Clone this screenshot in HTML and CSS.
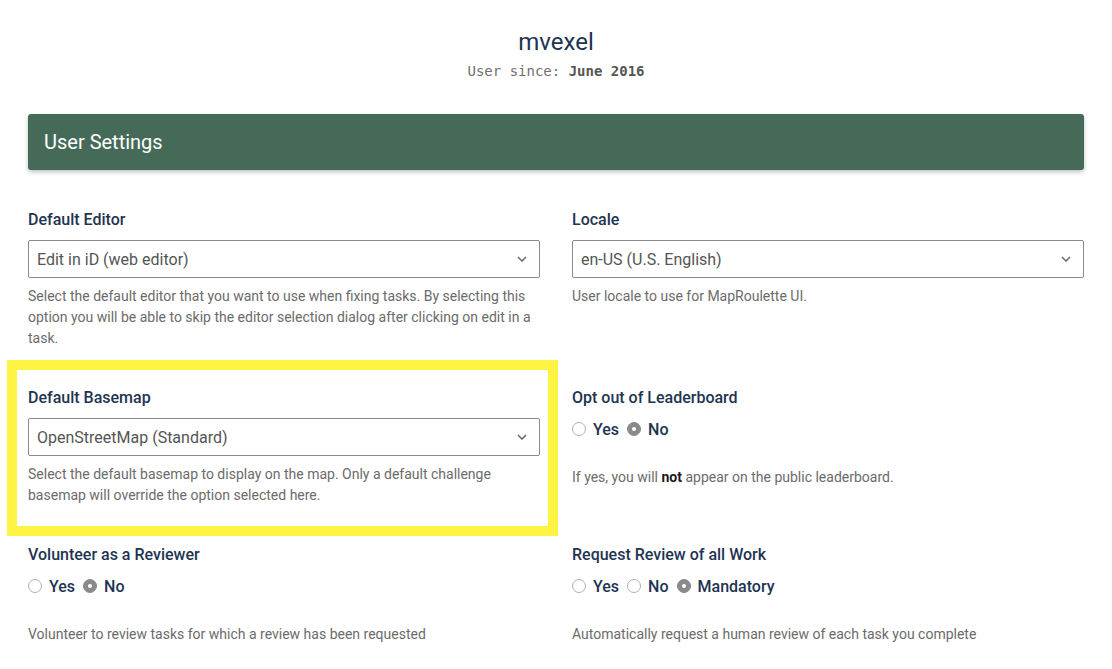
FILE: index.html
```html
<!DOCTYPE html>
<html>
<head>
<meta charset="utf-8">
<link rel="stylesheet" href="styles.css">
</head>
<body>
<div class="page">
  <div class="profile">
    <h1 class="username">mvexel</h1>
    <div class="since">User since: <strong>June 2016</strong></div>
  </div>
  <div class="settings-bar">User Settings</div>
  <div class="settings-grid">
    <div class="field">
      <div class="label">Default Editor</div>
      <div class="select"><span>Edit in iD (web editor)</span><svg class="chev" width="10" height="6" viewBox="0 0 10 6"><path d="M1 1l4 4 4-4" fill="none" stroke="#666" stroke-width="1.5"/></svg></div>
      <div class="help">Select the default editor that you want to use when fixing tasks. By selecting this option you will be able to skip the editor selection dialog after clicking on edit in a task.</div>
    </div>
    <div class="field">
      <div class="label">Locale</div>
      <div class="select"><span>en-US (U.S. English)</span><svg class="chev" width="10" height="6" viewBox="0 0 10 6"><path d="M1 1l4 4 4-4" fill="none" stroke="#666" stroke-width="1.5"/></svg></div>
      <div class="help">User locale to use for MapRoulette UI.</div>
    </div>
    <div class="field highlighted">
      <div class="label">Default Basemap</div>
      <div class="select"><span>OpenStreetMap (Standard)</span><svg class="chev" width="10" height="6" viewBox="0 0 10 6"><path d="M1 1l4 4 4-4" fill="none" stroke="#666" stroke-width="1.5"/></svg></div>
      <div class="help">Select the default basemap to display on the map. Only a default challenge basemap will override the option selected here.</div>
      <div class="highlight-box"></div>
    </div>
    <div class="field">
      <div class="label">Opt out of Leaderboard</div>
      <div class="radios">
        <label class="opt"><span class="radio"></span>Yes</label>
        <label class="opt"><span class="radio checked"></span>No</label>
      </div>
      <div class="help help-radio">If yes, you will <strong>not</strong> appear on the public leaderboard.</div>
    </div>
    <div class="field">
      <div class="label">Volunteer as a Reviewer</div>
      <div class="radios">
        <label class="opt"><span class="radio"></span>Yes</label>
        <label class="opt"><span class="radio checked"></span>No</label>
      </div>
      <div class="help help-radio">Volunteer to review tasks for which a review has been requested</div>
    </div>
    <div class="field">
      <div class="label">Request Review of all Work</div>
      <div class="radios">
        <label class="opt"><span class="radio"></span>Yes</label>
        <label class="opt"><span class="radio"></span>No</label>
        <label class="opt"><span class="radio checked"></span>Mandatory</label>
      </div>
      <div class="help help-radio">Automatically request a human review of each task you complete</div>
    </div>
  </div>
</div>
</body>
</html>
```

FILE: styles.css
```css
* { box-sizing: border-box; }
html, body { margin: 0; padding: 0; background: #fff; }
body {
  font-family: Roboto, "Liberation Sans", Arial, sans-serif;
  color: #1e3452;
}
.page {
  padding: 27px 28px 0 28px;
}
.profile {
  text-align: center;
}
.username {
  margin: 0;
  font-size: 24px;
  line-height: 30px;
  font-weight: 400;
  color: #1e3452;
}
.since {
  margin-top: 5px;
  font-family: "DejaVu Sans Mono", "Liberation Mono", monospace;
  font-size: 14px;
  line-height: 18px;
  color: #707070;
}
.since strong {
  color: #555;
  font-weight: 700;
}
.settings-bar {
  margin-top: 34px;
  height: 56px;
  background: #456b58;
  border-radius: 3px;
  box-shadow: 0 2px 4px rgba(0,0,0,0.25);
  color: #fff;
  font-size: 20px;
  line-height: 56px;
  padding-left: 16px;
}
.settings-grid {
  margin-top: 40px;
  display: grid;
  grid-template-columns: 1fr 1fr;
  column-gap: 32px;
  row-gap: 39px;
}
.field {
  position: relative;
}
.label {
  font-size: 16px;
  line-height: 20px;
  font-weight: 500;
  color: #1e3452;
}
.select {
  margin-top: 10px;
  height: 38px;
  border: 1px solid #8a8a8a;
  border-radius: 2px;
  display: flex;
  align-items: center;
  justify-content: space-between;
  padding: 0 12px 0 8px;
  font-size: 16px;
  color: #555;
}
.chev { display: block; }
.help {
  margin-top: 8px;
  font-size: 14px;
  line-height: 21px;
  color: #6b6b6b;
}
.help strong {
  color: #1a1a1a;
  font-weight: 700;
}
.help-radio {
  margin-top: 27px;
}
.radios {
  margin-top: 10px;
  display: flex;
  align-items: center;
  gap: 8px;
  height: 22px;
}
.opt {
  display: flex;
  align-items: center;
  gap: 7px;
  font-size: 16px;
  font-weight: 500;
  color: #1e3452;
}
.radio {
  width: 14px;
  height: 14px;
  border-radius: 50%;
  border: 1px solid #b0b0b0;
  background: #fff;
  display: inline-block;
  position: relative;
}
.radio.checked {
  background: #8a8a8a;
  border-color: #8a8a8a;
}
.radio.checked::after {
  content: "";
  position: absolute;
  left: 4px;
  top: 4px;
  width: 4px;
  height: 4px;
  border-radius: 50%;
  background: #fff;
}
.highlight-box {
  position: absolute;
  left: -21px;
  top: -28px;
  width: 551px;
  height: 176px;
  border: 10px solid #fff343;
  pointer-events: none;
}
```
